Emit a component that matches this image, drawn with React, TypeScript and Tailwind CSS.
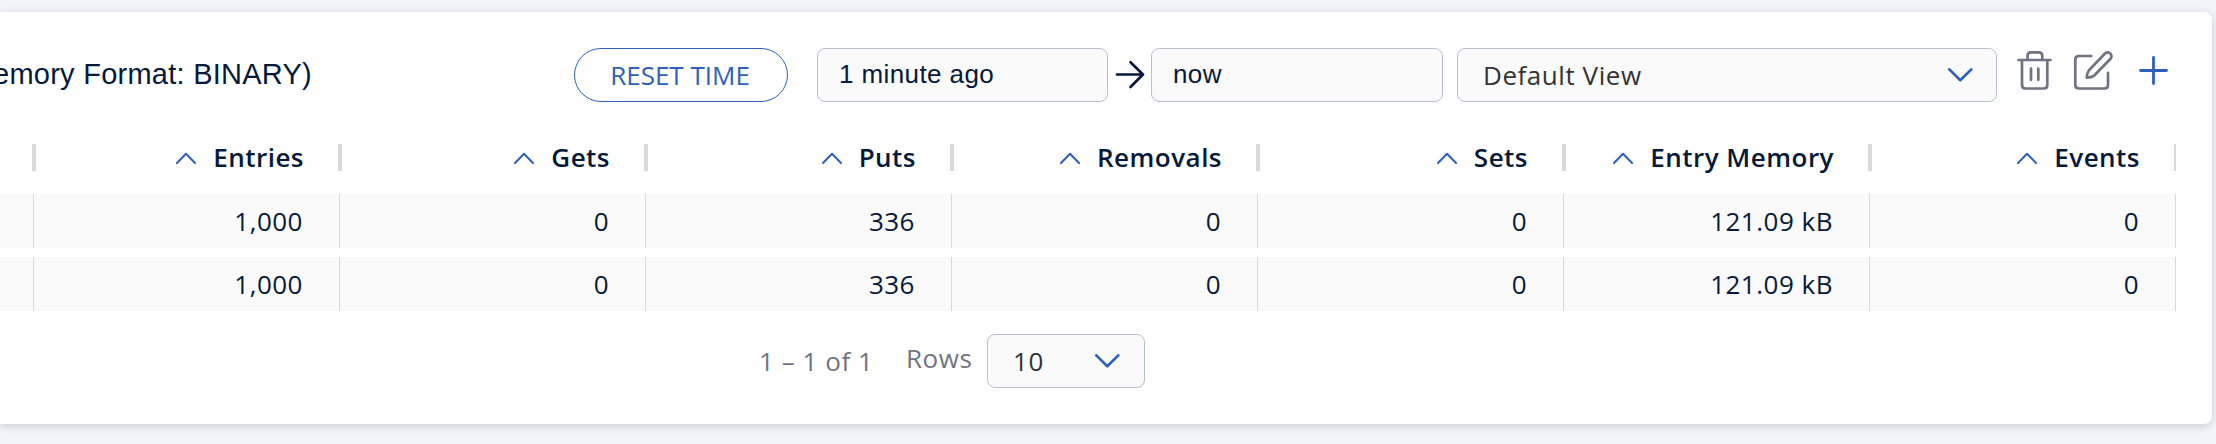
import React from "react";

const columns = ["Entries", "Gets", "Puts", "Removals", "Sets", "Entry Memory", "Events"];
const rows = [
  ["1,000", "0", "336", "0", "0", "121.09 kB", "0"],
  ["1,000", "0", "336", "0", "0", "121.09 kB", "0"],
];

function SortIcon() {
  return (
    <svg className="h-3 w-5 shrink-0" viewBox="0 0 20 12" fill="none" stroke="#2f5fbd" strokeWidth="2" strokeLinecap="round" strokeLinejoin="round">
      <path d="M1 11 L10 1.7 L19 11" />
    </svg>
  );
}

function ChevronDown() {
  return (
    <svg className="h-[14px] w-[26px] shrink-0" viewBox="0 0 26 14" fill="none" stroke="#2f5fbd" strokeWidth="2.7" strokeLinecap="round" strokeLinejoin="round">
      <path d="M2.3 1.4 L13.3 12.2 L24.3 1.4" />
    </svg>
  );
}

function Resizer() {
  return <span className="-mr-0.5 h-[27px] w-1 shrink-0 bg-[#d9d9d9]" />;
}

const field = "flex h-[54px] shrink-0 items-center rounded-lg border border-[#b7c1ce] bg-[#fafafa]";

export default function App() {
  return (
    <div className="h-[444px] w-[2216px] overflow-hidden bg-[#f2f4f9] pt-3 pr-1 font-['Open_Sans',sans-serif] text-[26px] text-[#061938]">
      <div className="flex h-[412px] flex-col overflow-hidden rounded-r-lg bg-white shadow-[0_2px_10px_rgba(7,25,56,0.18)]">
        <div className="flex h-[124px] shrink-0 items-start pt-9">
          <div className="flex h-[54px] w-[574px] shrink-0 items-center">
            <div className="flex w-[312px] justify-end overflow-hidden pb-0.5 font-['Liberation_Sans',sans-serif] text-[29px] leading-10 tracking-[0.25px] whitespace-nowrap">
              emory Format: BINARY)
            </div>
          </div>
          <button className="h-[54px] w-[214px] shrink-0 rounded-full border border-[#2f5fbd] pr-0.5 text-[#2f5fbd]">RESET TIME</button>
          <div className={`${field} ml-[29px] w-[291px] pb-0.5 pl-[21px] font-['Liberation_Sans',sans-serif] tracking-[0.4px]`}>1 minute ago</div>
          <svg className="mx-[6px] mt-3 h-[30px] w-[31px] shrink-0" viewBox="0 0 31 30" fill="none" stroke="#061938" strokeWidth="2.7" strokeLinecap="round" strokeLinejoin="round">
            <path d="M3 14.5 H29 M16.5 2.3 L29 14.5 L16.5 27" />
          </svg>
          <div className={`${field} w-[292px] pb-0.5 pl-[21px] font-['Liberation_Sans',sans-serif] tracking-[0.4px]`}>now</div>
          <div className={`${field} ml-[14px] w-[540px] justify-between pr-[23px] pl-[25px] tracking-[0.55px] text-[#333]`}>
            Default View
            <ChevronDown />
          </div>
          <svg className="mt-[2px] ml-[19px] h-10 w-[38px] shrink-0" viewBox="0 0 38 40" fill="none" stroke="#707482" strokeWidth="2.7" strokeLinecap="round" strokeLinejoin="round">
            <path d="M2.5 10 H34.5 M6 10 V35 Q6 38.5 9.5 38.5 H27.8 Q31.3 38.5 31.3 35 V10 M11.5 10 V6 Q11.5 2.3 15 2.3 H22.8 Q26.3 2.3 26.3 6 V10 M15 18.7 V29.8 M22.3 18.7 V29.8" />
          </svg>
          <svg className="mt-[2px] ml-[19px] h-10 w-10 shrink-0" viewBox="0 0 40 40" fill="none" stroke="#707482" strokeWidth="2.7" strokeLinecap="round" strokeLinejoin="round">
            <path d="M18.3 6 H6 Q2.3 6 2.3 9.7 V35 Q2.3 38.5 6 38.5 H31.5 Q35 38.5 35 35 V22.8" />
            <path d="M32 3.5 A3.8 3.8 0 0 1 37.3 9 L21.5 25.2 Q19.5 27.2 13.7 27.6 Q14 23 16 20.3 Z" />
          </svg>
          <svg className="mt-2 ml-[26px] h-[29px] w-[29px] shrink-0" viewBox="0 0 29 29" fill="none" stroke="#2f5fbd" strokeWidth="2.8" strokeLinecap="round">
            <path d="M1.5 14.5 H27.5 M14.5 1.5 V27.5" />
          </svg>
        </div>
        <div className="flex h-[58px] w-[2176px] shrink-0 items-start overflow-hidden pt-2 font-semibold tracking-[0.48px]">
          <div className="flex w-[34px] shrink-0 justify-end"><Resizer /></div>
          {columns.map((name) => (
            <div key={name} className="flex h-[27px] w-[306px] shrink-0 items-center justify-end">
              <SortIcon />
              <span className="mr-[34px] ml-[17px] leading-[27px]">{name}</span>
              <Resizer />
            </div>
          ))}
        </div>
        <div className="flex w-[2176px] shrink-0 flex-col gap-[9px]">
          {rows.map((row, r) => (
            <div key={r} className="flex h-[54px] bg-[#fafafa] tracking-[0.5px]">
              <div className="w-[34px] border-r border-[#d9d9d9]" />
              {row.map((value, c) => (
                <div key={c} className="flex w-[306px] items-center justify-end border-r border-[#d9d9d9] pr-9">{value}</div>
              ))}
            </div>
          ))}
        </div>
        <div className="mt-[23px] flex h-[54px] shrink-0 items-center pl-[759px] tracking-[0.55px] text-[#707482]">
          <span className="w-[147px]">1 – 1 of 1</span>
          <span className="w-[81px] pb-1.5">Rows</span>
          <div className={`${field} w-[158px] justify-between pr-6 pl-[25px] text-[#333]`}>
            10
            <ChevronDown />
          </div>
        </div>
      </div>
    </div>
  );
}
